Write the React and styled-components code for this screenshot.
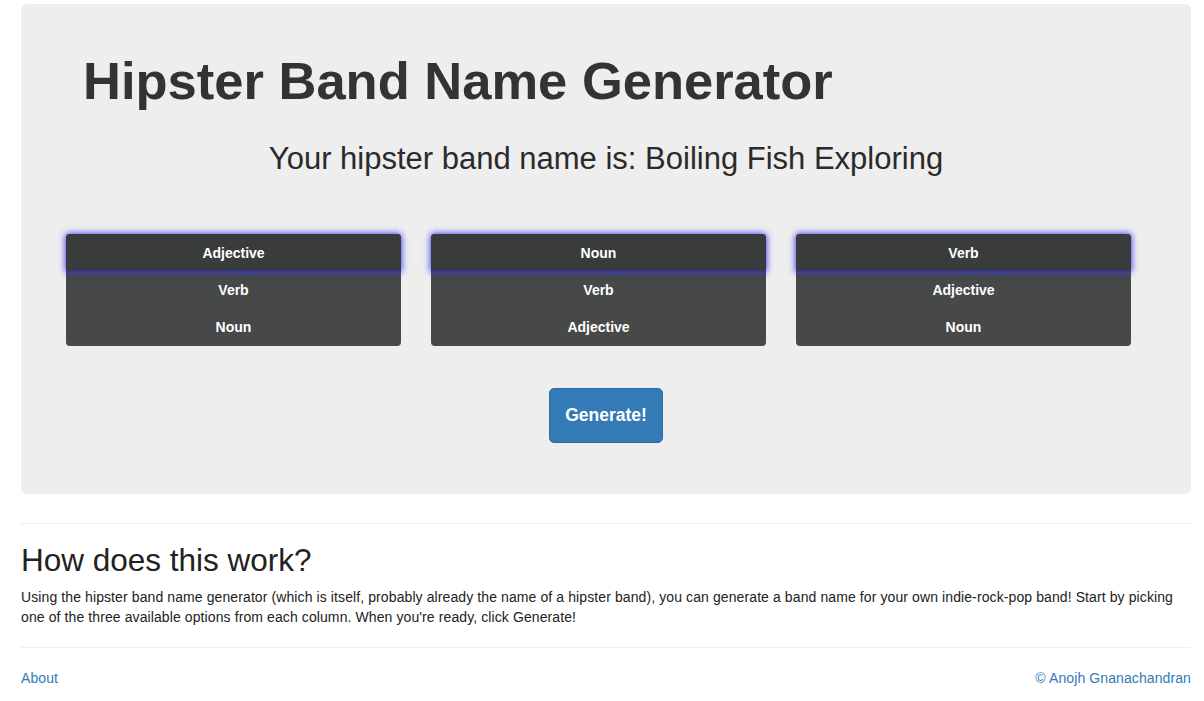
import React, { useState } from "react";
import styled, { createGlobalStyle } from "styled-components";

const GlobalStyle = createGlobalStyle`
  body {
    margin: 0;
    background: #fff;
    font-family: "Liberation Sans", Arial, Helvetica, sans-serif;
    font-size: 14px;
    line-height: 20px;
    letter-spacing: 0.1px;
    color: #333;
  }
`;

const columns = [
  ["Adjective", "Verb", "Noun"],
  ["Noun", "Verb", "Adjective"],
  ["Verb", "Adjective", "Noun"],
];

function App() {
  const [picked, setPicked] = useState([0, 0, 0]);

  const pick = (col, idx) => {
    const next = [...picked];
    next[col] = idx;
    setPicked(next);
  };

  return (
    <Container>
      <GlobalStyle />
      <Jumbotron>
        <Title>Hipster Band Name Generator</Title>
        <Result>Your hipster band name is: Boiling Fish Exploring</Result>
        <Pickers>
          {columns.map((options, col) => (
            <ListBox key={col}>
              {options.map((opt, idx) => (
                <Option
                  key={opt}
                  selected={picked[col] === idx}
                  onClick={() => pick(col, idx)}
                >
                  {opt}
                </Option>
              ))}
            </ListBox>
          ))}
        </Pickers>
        <ButtonRow>
          <Button type="button">Generate!</Button>
        </ButtonRow>
      </Jumbotron>

      <Rule />
      <H2>How does this work?</H2>
      <Text>
        Using the hipster band name generator (which is itself, probably already the name of a
        hipster band), you can generate a band name for your own indie-rock-pop band! Start by
        picking one of the three available options from each column. When you're ready, click
        Generate!
      </Text>
      <Rule />
      <Footer>
        <Link href="#">About</Link>
        <Link href="#">© Anojh Gnanachandran</Link>
      </Footer>
    </Container>
  );
}

const Container = styled.div`
  padding: 4px 13px 0 21px;
`;

const Jumbotron = styled.div`
  background-color: #eee;
  border-radius: 6px;
  padding: 48px 0 51px;
`;

const Title = styled.h1`
  margin: 0 0 0 62px;
  font-size: 52.5px;
  line-height: 1.1;
  font-weight: bold;
  letter-spacing: 0;
  color: #333;
`;

const Result = styled.p`
  margin: 30px 0 0;
  text-align: center;
  font-size: 31px;
  line-height: 38px;
  font-weight: 300;
  letter-spacing: 0;
  color: #2a2a2a;
`;

const Pickers = styled.div`
  display: grid;
  grid-template-columns: repeat(3, 335px);
  column-gap: 30px;
  margin: 56px 0 0 45px;
`;

const ListBox = styled.div`
  background-color: #474848;
  border-radius: 4px;
  padding-bottom: 1px;
`;

const Option = styled.div`
  height: 37px;
  line-height: 39px;
  text-align: center;
  font-size: 14px;
  font-weight: bold;
  letter-spacing: 0;
  color: #fff;
  cursor: pointer;
  border-radius: ${props => (props.selected ? "4px 4px 0 0" : "0")};
  background-color: ${props => (props.selected ? "#3a3b3b" : "transparent")};
  box-shadow: ${props =>
    props.selected
      ? "0 0 6px 1px rgba(55, 55, 255, 0.9), 0 1px 0 #2b2b9c"
      : "none"};
  position: relative;
`;

const ButtonRow = styled.div`
  display: flex;
  justify-content: center;
  margin-top: 42px;
`;

const Button = styled.button`
  font-family: inherit;
  font-size: 17.5px;
  font-weight: bold;
  line-height: 24px;
  letter-spacing: 0;
  padding: 14px 15px 15px;
  color: #fff;
  background-color: #337ab7;
  border: 1px solid #2e6da4;
  border-radius: 5px;
  cursor: pointer;
`;

const Rule = styled.hr`
  margin: 29px 0 20px;
  border: 0;
  border-top: 1px solid #eee;
`;

const H2 = styled.h2`
  margin: 0;
  font-size: 31.5px;
  line-height: 33px;
  font-weight: 500;
  letter-spacing: 0;
  color: #222;
`;

const Text = styled.p`
  margin: 10px 0 0;
  color: #222;
  & + hr {
    margin-top: 20px;
  }
`;

const Footer = styled.footer`
  display: flex;
  justify-content: space-between;
  padding-bottom: 20px;
`;

const Link = styled.a`
  color: #337ab7;
  text-decoration: none;
`;

export default App;
